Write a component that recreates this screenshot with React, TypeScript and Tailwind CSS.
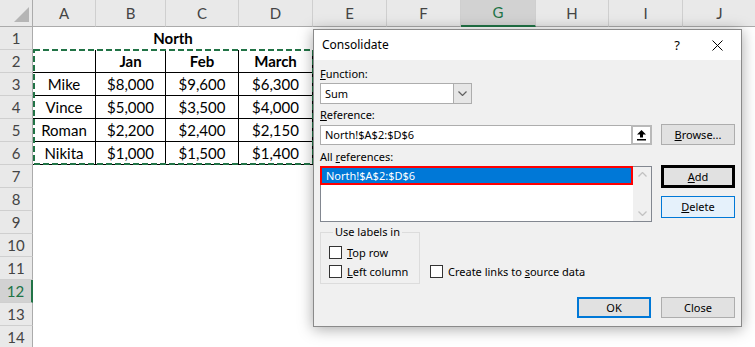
import React from "react";

const COLS = [
  { k: "A", w: "w-[63px]" },
  { k: "B", w: "w-[70px]" },
  { k: "C", w: "w-[73px]" },
  { k: "D", w: "w-[74px]" },
  { k: "E", w: "w-[74px]" },
  { k: "F", w: "w-[74px]" },
  { k: "G", w: "w-[75px]" },
  { k: "H", w: "w-[73px]" },
  { k: "I", w: "w-[74px]" },
  { k: "J", w: "w-[74px]" },
];

const DATA: string[][] = [
  ["", "Jan", "Feb", "March"],
  ["Mike", "$8,000", "$9,600", "$6,300"],
  ["Vince", "$5,000", "$3,500", "$4,000"],
  ["Roman", "$2,200", "$2,400", "$2,150"],
  ["Nikita", "$1,000", "$1,500", "$1,400"],
];

function RowHead({ n }: { n: number }) {
  const sel = n === 12;
  return (
    <div
      className={
        "w-[33px] shrink-0 flex items-center justify-center border-b border-b-[#cfcfcf] " +
        (sel
          ? "bg-[#d2d2d2] text-[#217346] border-r-2 border-r-[#217346]"
          : "bg-[#e9e9e9] text-[#444] border-r border-r-[#ababab]")
      }
    >
      {n}
    </div>
  );
}

function Sheet() {
  return (
    <div className="relative font-['Lato',sans-serif] text-[15px] text-black">
      {/* column headers */}
      <div className="flex h-[27px]">
        <div className="w-[33px] shrink-0 bg-[#e9e9e9] border-r border-b border-[#ababab] relative">
          <svg className="absolute left-0 top-0" width="33" height="27" viewBox="0 0 33 27">
            <polygon points="29,7 29,22 14,22" fill="#b5b5b5" />
          </svg>
        </div>
        {COLS.map((c) => {
          const sel = c.k === "G";
          return (
            <div
              key={c.k}
              className={
                c.w +
                " shrink-0 flex items-center justify-center border-r border-r-[#cfcfcf] " +
                (sel
                  ? "bg-[#d2d2d2] text-[#217346] border-b-2 border-b-[#217346]"
                  : "bg-[#e9e9e9] text-[#444] border-b border-b-[#ababab]")
              }
            >
              {c.k}
            </div>
          );
        })}
      </div>

      {/* row 1 */}
      <div className="flex h-[23px]">
        <RowHead n={1} />
        <div className="w-[280px] shrink-0 flex items-center justify-center font-bold">North</div>
      </div>

      {/* rows 2-6 */}
      {DATA.map((r, i) => (
        <div key={i} className="flex h-[23px]">
          <RowHead n={i + 2} />
          {r.map((v, j) => (
            <div
              key={j}
              className={
                COLS[j].w +
                " shrink-0 flex items-center justify-center border-r border-b border-black " +
                (i === 0 ? "font-bold" : "")
              }
            >
              {v}
            </div>
          ))}
        </div>
      ))}

      {/* rows 7-14 */}
      {[7, 8, 9, 10, 11, 12, 13, 14].map((n) => (
        <div key={n} className="flex h-[23px]">
          <RowHead n={n} />
        </div>
      ))}

      {/* copy marquee */}
      <svg className="absolute left-[33px] top-[49px]" width="281" height="116" viewBox="0 0 281 116">
        <rect x="1" y="1" width="279" height="114" fill="none" stroke="#217346" strokeWidth="2" strokeDasharray="6 3" />
      </svg>
    </div>
  );
}

function Check({ children, className = "" }: { children: React.ReactNode; className?: string }) {
  return (
    <div className={"flex items-center h-[19px] " + className}>
      <span className="w-[13px] h-[13px] bg-white border border-[#333] shrink-0" />
      <span className="ml-[5px]">{children}</span>
    </div>
  );
}

function Btn({ children, className = "" }: { children: React.ReactNode; className?: string }) {
  return (
    <div className={"w-[74px] flex items-center justify-center " + className}>{children}</div>
  );
}

function Dialog() {
  return (
    <div className="absolute left-[313px] top-[29px] w-[429px] h-[298px] border border-[#8a8a8a] bg-[#f0f0f0] shadow-[0_2px_14px_rgba(0,0,0,0.35)] font-['Noto_Sans',sans-serif] text-[11px] text-black leading-[16px]">
      {/* title bar */}
      <div className="h-[30px] bg-white flex items-center pl-[8px] text-[12px]">
        <span>Consolidate</span>
        <span className="ml-auto mr-[32px] text-[13px]">?</span>
        <svg className="mr-[18px]" width="11" height="11" viewBox="0 0 11 11">
          <path d="M0.5 0.5 L10.5 10.5 M10.5 0.5 L0.5 10.5" stroke="#000" strokeWidth="1" />
        </svg>
      </div>

      <div className="px-[6px]">
        <div className="mt-[6px] h-[16px]">
          <u>F</u>unction:
        </div>
        <div className="mt-[1px] w-[152px] h-[21px] flex bg-white border border-[#adadad]">
          <span className="flex-1 pl-[4px] flex items-center">Sum</span>
          <div className="w-[18px] bg-[#e6e6e6] border-l border-[#adadad] flex items-center justify-center">
            <svg width="9" height="5" viewBox="0 0 9 5">
              <path d="M0.5 0.5 L4.5 4.5 L8.5 0.5" fill="none" stroke="#606060" strokeWidth="1.2" />
            </svg>
          </div>
        </div>

        <div className="mt-[3px] h-[16px]">
          <u>R</u>eference:
        </div>
        <div className="mt-[1px] flex gap-[9px] h-[21px]">
          <div className="w-[332px] h-[20px] mt-[1px] flex bg-white border border-[#adadad]">
            <span className="flex-1 pl-[4px] flex items-center">North!$A$2:$D$6</span>
            <div className="w-[21px] border-2 border-[#b9b9b9] -m-px bg-white flex items-center justify-center">
              <svg width="11" height="12" viewBox="0 0 11 12">
                <polygon points="5.5,1 10,5.5 7,5.5 7,8.5 4,8.5 4,5.5 1,5.5" fill="#000" />
                <rect x="1" y="10" width="9" height="1.5" fill="#000" />
              </svg>
            </div>
          </div>
          <Btn className="h-[21px] bg-[#e1e1e1] border border-[#adadad]">
            <span>
              <u>B</u>rowse...
            </span>
          </Btn>
        </div>

        <div className="mt-[4px] h-[16px]">
          All <u>r</u>eferences:
        </div>
        <div className="flex gap-[9px]">
          <div className="w-[332px] h-[56px] mt-[1px] flex bg-white border border-[#828790]">
            <div className="flex-1">
              <div className="h-[19px] -ml-px -mt-px bg-[#0078d7] border-2 border-[#ff0000] text-white pl-[4px] flex items-center">
                North!$A$2:$D$6
              </div>
            </div>
            <div className="w-[18px] bg-[#f0f0f0] flex flex-col items-center justify-between py-[5px]">
              <svg width="9" height="5" viewBox="0 0 9 5">
                <path d="M0.5 4.5 L4.5 0.5 L8.5 4.5" fill="none" stroke="#c2c2c2" strokeWidth="1.3" />
              </svg>
              <svg width="9" height="5" viewBox="0 0 9 5">
                <path d="M0.5 0.5 L4.5 4.5 L8.5 0.5" fill="none" stroke="#c2c2c2" strokeWidth="1.3" />
              </svg>
            </div>
          </div>
          <div className="flex flex-col">
            <Btn className="h-[23px] bg-[#e1e1e1] border-[3px] border-black">
              <span>
                <u>A</u>dd
              </span>
            </Btn>
            <Btn className="mt-[8px] h-[22px] bg-[#e5f1fb] border border-[#0078d7]">
              <span>
                <u>D</u>elete
              </span>
            </Btn>
          </div>
        </div>

        <div className="mt-[2px] flex items-end">
          <fieldset className="w-[100px] border border-[#dcdcdc] pl-[8px] pt-[3px] pb-[2px]">
            <legend className="ml-[4px] px-[2px] leading-[16px]">Use labels in</legend>
            <Check>
              <u>T</u>op row
            </Check>
            <Check>
              <u>L</u>eft column
            </Check>
          </fieldset>
          <Check className="ml-[10px] mb-[3px]">
            Create links to <u>s</u>ource data
          </Check>
        </div>

        <div className="mt-[13px] flex justify-end gap-[10px]">
          <Btn className="h-[21px] bg-[#e1e1e1] border-2 border-[#0078d7]">OK</Btn>
          <Btn className="h-[21px] bg-[#e1e1e1] border border-[#adadad]">Close</Btn>
        </div>
      </div>
    </div>
  );
}

export default function App() {
  return (
    <div className="relative w-[755px] h-[347px] overflow-hidden bg-white">
      <Sheet />
      <Dialog />
    </div>
  );
}
